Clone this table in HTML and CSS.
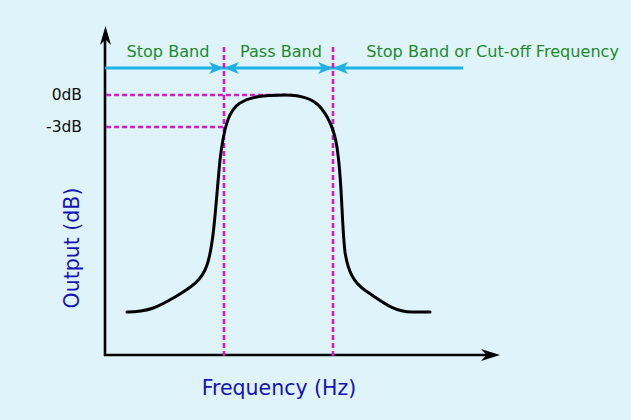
FILE: index.html
```html
<!DOCTYPE html>
<html lang="en">
<head>
<meta charset="utf-8">
<title>Band Pass Filter Response</title>
<link rel="stylesheet" href="styles.css">
</head>
<body>
<figure class="chart">
<svg class="plot" width="631" height="420" viewBox="0 0 631 420" xmlns="http://www.w3.org/2000/svg">
  <!-- axes -->
  <line class="axis" x1="105" y1="356" x2="105" y2="36"/>
  <line class="axis" x1="104" y1="355" x2="492" y2="355"/>
  <path class="axis-head" d="M105.5,26 L111,45 L105.5,39.5 L100,45 Z"/>
  <path class="axis-head" d="M500,355 L481,361 L486.5,355 L481,349 Z"/>

  <!-- band arrow line -->
  <line class="band" x1="105" y1="68" x2="463" y2="68"/>
  <path class="band-head" d="M224,68 L209,62 L213,68 L209,74 Z"/>
  <path class="band-head" d="M224,68 L239,62 L235,68 L239,74 Z"/>
  <path class="band-head" d="M333,68 L318,62 L322,68 L318,74 Z"/>
  <path class="band-head" d="M333,68 L348,62 L344,68 L348,74 Z"/>

  <!-- dashed guides -->
  <line class="guide" x1="224" y1="47" x2="224" y2="356"/>
  <line class="guide" x1="333" y1="47" x2="333" y2="356"/>
  <line class="guide" x1="106" y1="95" x2="292" y2="95"/>
  <line class="guide" x1="106" y1="127" x2="223" y2="127"/>

  <!-- response curve -->
  <path class="curve" d="M127,312 C148,312 158,307 175,297 C192,287 202,280 207,265 C214,245 216,200 220,160 C224,126 229,110 240,103 C250,97 262,95 285,95 C300,95 313,98 321,108 C331,120 336,135 338,155 C342,185 342,228 345,252 C348,272 354,283 366,291 C380,300 393,312 412,312 L430,312"/>

  <!-- labels -->
  <text class="band-label" x="168" y="57" text-anchor="middle">Stop Band</text>
  <text class="band-label" x="281" y="57" text-anchor="middle">Pass Band</text>
  <text class="band-label" x="619" y="57" text-anchor="end">Stop Band or Cut-off Frequency</text>
  <text class="db-label" x="82" y="100" text-anchor="end">0dB</text>
  <text class="db-label" x="82" y="132" text-anchor="end">-3dB</text>
  <text class="axis-label" x="279" y="395" text-anchor="middle">Frequency (Hz)</text>
  <text class="axis-label" transform="translate(79 248) rotate(-90)" text-anchor="middle">Output (dB)</text>
</svg>
</figure>
</body>
</html>
```
FILE: styles.css
```css
html, body {
  margin: 0;
  padding: 0;
  background: #dff3fa;
}
body {
  width: 631px;
  height: 420px;
  overflow: hidden;
  font-family: "DejaVu Sans", Verdana, sans-serif;
}
.chart {
  margin: 0;
  width: 631px;
  height: 420px;
}
.plot {
  display: block;
}
.axis {
  stroke: #000;
  stroke-width: 2.6;
}
.axis-head {
  fill: #000;
}
.band {
  stroke: #1db1e4;
  stroke-width: 2.8;
}
.band-head {
  fill: #1db1e4;
}
.guide {
  stroke: #d51cc9;
  stroke-width: 2.6;
  stroke-dasharray: 5 3;
}
.curve {
  fill: none;
  stroke: #000;
  stroke-width: 3;
  stroke-linecap: round;
}
.band-label {
  fill: #1d8a2a;
  font-size: 16.1px;
  font-family: "DejaVu Sans", Verdana, sans-serif;
}
.db-label {
  fill: #111;
  font-size: 15.5px;
  font-family: "DejaVu Sans", Verdana, sans-serif;
}
.axis-label {
  fill: #1414b4;
  font-size: 20.5px;
  font-family: "DejaVu Sans", Verdana, sans-serif;
}
```
